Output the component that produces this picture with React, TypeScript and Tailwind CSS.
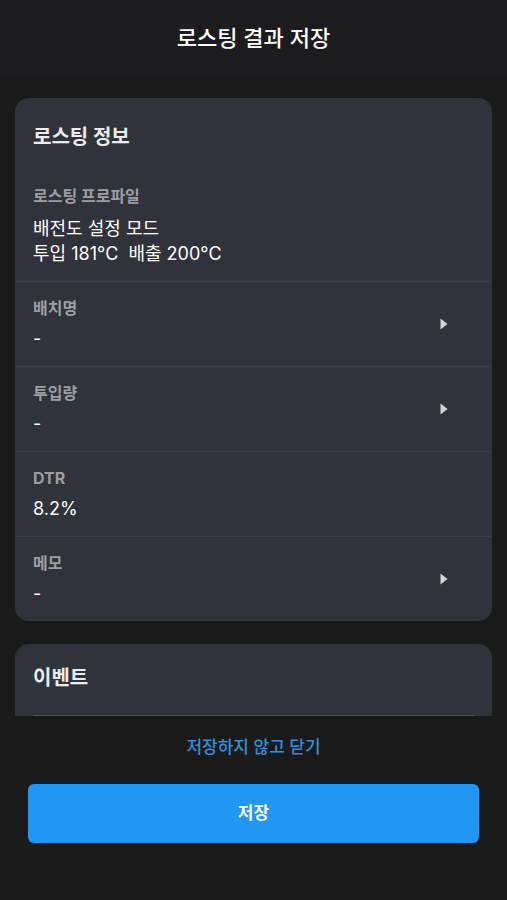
import React from "react";

const Arrow = () => (
  <svg width="8" height="12" viewBox="0 0 8 12" className="shrink-0">
    <path d="M0.5 0.5 L7.5 6 L0.5 11.5 Z" fill="#d4d4d6" />
  </svg>
);

const InfoRow: React.FC<{ label: string; value: string; arrow?: boolean }> = ({
  label,
  value,
  arrow,
}) => (
  <div className="flex h-[85px] items-center border-t border-[#3b3e46] pl-[18px] pr-[44px]">
    <div className="flex flex-1 flex-col gap-[10px]">
      <span className="text-[16px] font-bold leading-[20px] text-[#9c9ea3]">
        {label}
      </span>
      <span className="text-[18px] leading-[22px] text-white">{value}</span>
    </div>
    {arrow && <Arrow />}
  </div>
);

export default function App() {
  return (
    <div
      className="flex h-[900px] w-full flex-col bg-[#1a1a1a] text-white"
      style={{ fontFamily: 'Inter, "Noto Sans CJK KR", sans-serif' }}
    >
      <header className="flex h-[76px] shrink-0 items-center justify-center bg-[#1c1c1e]">
        <h1 className="text-[22px] font-medium">로스팅 결과 저장</h1>
      </header>

      <div className="flex flex-1 flex-col gap-[23px] overflow-hidden px-[15px] pt-[22px]">
        <section className="shrink-0 overflow-hidden rounded-[14px] bg-[#30333b]">
          <div className="h-[72px] pl-[18px] pt-[26px]">
            <h2 className="text-[20px] font-bold leading-[26px] text-[#ececec]">
              로스팅 정보
            </h2>
          </div>
          <div className="flex h-[111px] flex-col pl-[18px] pt-[16px]">
            <span className="text-[16px] font-bold leading-[20px] text-[#9c9ea3]">
              로스팅 프로파일
            </span>
            <div className="mt-[10px] flex flex-col text-[18px] leading-[25px]">
              <span>배전도 설정 모드</span>
              <span>투입 181°C&nbsp; 배출 200°C</span>
            </div>
          </div>
          <InfoRow label="배치명" value="-" arrow />
          <InfoRow label="투입량" value="-" arrow />
          <InfoRow label="DTR" value="8.2%" />
          <InfoRow label="메모" value="-" arrow />
        </section>

        <section className="shrink-0 rounded-t-[14px] bg-[#30333b] px-[18px] pt-[21px]">
          <h2 className="text-[20px] font-bold leading-[26px] text-[#ececec]">
            이벤트
          </h2>
          <div className="mt-[24px] border-t border-[#4a4d55]" />
        </section>
      </div>

      <div className="flex h-[183px] shrink-0 flex-col items-center bg-[#1a1a1a] px-[28px] pt-[19px]">
        <button className="text-[17px] font-medium leading-[22px] text-[#2e8fdc]">
          저장하지 않고 닫기
        </button>
        <button className="mt-[26px] flex h-[59px] w-full items-center justify-center rounded-[6px] bg-[#2196f3] text-[17px] font-semibold text-white">
          저장
        </button>
      </div>
    </div>
  );
}
